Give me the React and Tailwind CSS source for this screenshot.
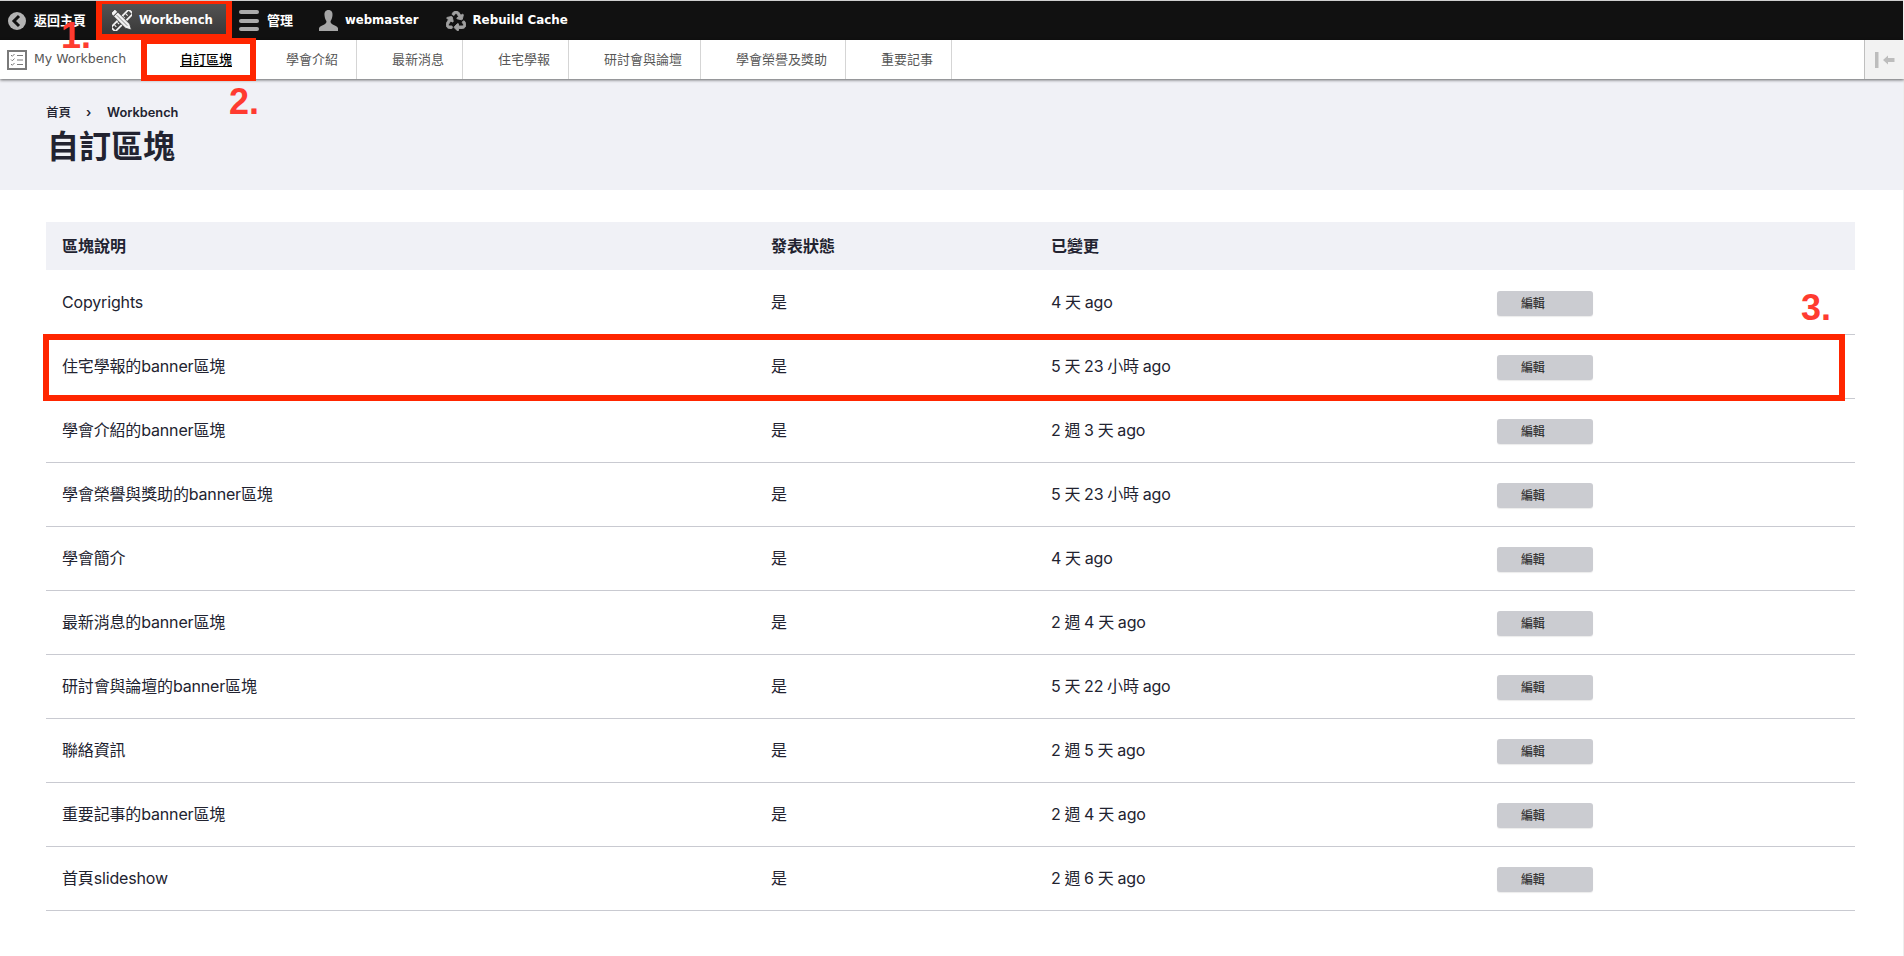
import React from "react";
import { FaRecycle } from "react-icons/fa";

const rows = [
  ["Copyrights", "4 天 ago"],
  ["住宅學報的banner區塊", "5 天 23 小時 ago"],
  ["學會介紹的banner區塊", "2 週 3 天 ago"],
  ["學會榮譽與獎助的banner區塊", "5 天 23 小時 ago"],
  ["學會簡介", "4 天 ago"],
  ["最新消息的banner區塊", "2 週 4 天 ago"],
  ["研討會與論壇的banner區塊", "5 天 22 小時 ago"],
  ["聯絡資訊", "2 週 5 天 ago"],
  ["重要記事的banner區塊", "2 週 4 天 ago"],
  ["首頁slideshow", "2 週 6 天 ago"],
];
const tabs = ["學會介紹", "最新消息", "住宅學報", "研討會與論壇", "學會榮譽及獎助", "重要記事"];
const barFont = "font-['DejaVu_Sans','Noto_Sans_CJK_TC',sans-serif]";

function BackIcon() {
  return (
    <svg width="18" height="18" viewBox="0 0 18 18">
      <circle cx="9" cy="9" r="9" fill="#b3b3b3" />
      <path d="M11 4 L6 9 L11 14" fill="none" stroke="#111" strokeWidth="3" />
    </svg>
  );
}
function ToolsIcon() {
  return (
    <svg width="20" height="21" viewBox="0 0 20 21" fill="none" stroke="#f2f2f2">
      <g transform="rotate(45 10 10.5)">
        <rect x="7" y="-2" width="6" height="25" strokeWidth="1.8" />
        <path d="M8 3h2.5M8 7h2.5M8 11h2.5M8 15h2.5M8 19h2.5" strokeWidth="1.1" />
      </g>
      <g transform="rotate(-45 10 10.5)">
        <path d="M7 -2.5 H13 V18.5 L10 24 L7 18.5 Z" fill="#f2f2f2" stroke="#3c3c3c" strokeWidth="0.8" />
        <path d="M7 1.5H13" stroke="#3c3c3c" strokeWidth="1" />
        <path d="M10 3V18" stroke="#777" strokeWidth="0.8" />
      </g>
    </svg>
  );
}
function MenuIcon() {
  return (
    <div className="flex h-[21px] w-5 flex-col justify-between">
      <div className="h-[4px] rounded-sm bg-[#aaaaaa]" />
      <div className="h-[4px] rounded-sm bg-[#aaaaaa]" />
      <div className="h-[4px] rounded-sm bg-[#aaaaaa]" />
    </div>
  );
}
function PersonIcon() {
  return (
    <svg width="19" height="21" viewBox="0 0 19 21">
      <path
        d="M9.5 0C6.6 0 5.2 2.2 5.5 5.2 5.8 8 6.5 9.8 7.4 11 7.7 12.6 6.8 13.8 4.8 14.8 2.5 15.9.6 16.5 0 18.2V21H19V18.2C18.4 16.5 16.5 15.9 14.2 14.8 12.2 13.8 11.3 12.6 11.6 11 12.5 9.8 13.2 8 13.5 5.2 13.8 2.2 12.4 0 9.5 0Z"
        fill="#a6a6a6"
      />
    </svg>
  );
}
function ChecklistIcon() {
  return (
    <svg width="20" height="20" viewBox="0 0 20 20" fill="none" stroke="#7a7a7a">
      <rect x="1" y="1" width="18" height="18" strokeWidth="2" />
      <path d="M4 5l1.3 1.3L7.5 4M4 9.5l1.3 1.3L7.5 8.5M4 14l1.3 1.3L7.5 13" strokeWidth="1" />
      <path d="M10 5.5h6M10 10h6M10 14.5h6" strokeWidth="1.2" />
    </svg>
  );
}
function CollapseIcon() {
  return (
    <svg width="20" height="16" viewBox="0 0 20 16" fill="#bdbdbd">
      <rect x="0" y="0" width="3.5" height="16" />
      <path d="M8 8 L13 3.5 V6 H19.5 V10 H13 V12.5 Z" />
    </svg>
  );
}

function Annotation({ className, children }) {
  return (
    <div className={"absolute font-['Liberation_Sans',sans-serif] text-[36px] leading-none font-bold text-[#ff3b30] " + className}>
      {children}
    </div>
  );
}

export default function App() {
  return (
    <div className="relative min-h-[956px] w-full overflow-hidden bg-white font-['Inter','Noto_Sans_CJK_TC',sans-serif] text-[#222330]">
      {/* Toolbar */}
      <div className={"flex h-[40px] items-center border-t border-[#cfcfcf] bg-[#111111] text-[13px] font-bold text-white " + barFont}>
        <div className="flex w-[96px] items-center gap-2 pl-2">
          <BackIcon />
          <span>返回主頁</span>
        </div>
        <div className="flex h-full w-[136px] items-center gap-[7px] bg-gradient-to-b from-[#565656] to-[#343434] pl-4">
          <ToolsIcon />
          <span className="text-[11.7px]">Workbench</span>
        </div>
        <div className="ml-[7px] flex items-center gap-2">
          <MenuIcon />
          <span>管理</span>
        </div>
        <div className="ml-[26px] flex items-center gap-[7px]">
          <PersonIcon />
          <span className="text-[11.7px]">webmaster</span>
        </div>
        <div className="ml-[28px] flex items-center gap-[6px]">
          <FaRecycle className="h-5 w-5 text-[#a0a0a0]" stroke="currentColor" strokeWidth={24} />
          <span className="text-[11.9px]">Rebuild Cache</span>
        </div>
      </div>

      {/* Tray */}
      <div className="relative z-10 flex h-[39px] items-stretch bg-white text-[13px] text-[#565656] shadow-[0_1px_3px_rgba(0,0,0,0.6)]">
        <div className="flex w-[144px] items-center gap-[7px] pl-[7px]">
          <ChecklistIcon />
          <span className={"text-[12.5px] " + barFont}>My Workbench</span>
        </div>
        <div className="flex items-center pr-[19px] pl-[36px] font-medium text-black underline underline-offset-2">自訂區塊</div>
        {tabs.map((t) => (
          <div key={t} className="flex items-center border-r border-[#d5d5d5] pr-[18px] pl-[35px]">
            {t}
          </div>
        ))}
        <div className="ml-auto flex w-[40px] items-center justify-center border-l border-[#bfbfbf] bg-[#f2f2f2] pl-[1px]">
          <CollapseIcon />
        </div>
      </div>

      {/* Page header */}
      <div className="h-[111px] bg-[#f0f1f6] pt-[26px] pl-[46px]">
        <div className="flex h-[17px] items-center text-[12.8px] leading-none font-semibold">
          <span className="text-[12.5px] font-medium">首頁</span>
          <span className="ml-[15px] w-[21px]">›</span>
          <span>Workbench</span>
        </div>
        <h1 className="mt-[3px] pl-[1px] text-[32px] leading-[44px] font-semibold">自訂區塊</h1>
      </div>

      {/* Table */}
      <div className="mt-[32px] ml-[46px] w-[1809px]">
        <div className="mb-px grid h-[48px] grid-cols-[709px_280px_445px_1fr] items-center bg-[#f0f1f6] text-base font-semibold">
          <div className="pl-4">區塊說明</div>
          <div className="pl-4">發表狀態</div>
          <div className="pl-4">已變更</div>
          <div />
        </div>
        {rows.map(([name, changed]) => (
          <div key={name} className="grid h-[64px] grid-cols-[709px_280px_445px_1fr] items-center border-b border-[#c9cad1] text-base tracking-[-0.01em] [word-spacing:-0.5px]">
            <div className="pb-[2px] pl-4">{name}</div>
            <div className="pb-[2px] pl-4">是</div>
            <div className="pb-[2px] pl-4">{changed}</div>
            <div className="pt-[2px] pl-[17px]">
              <div className="flex h-[25px] w-[96px] items-center rounded-[3px] bg-[#cbccd1] pl-6 text-[12px] font-medium text-[#333333] shadow-[0_1px_1px_rgba(0,0,0,0.08)]">
                編輯
              </div>
            </div>
          </div>
        ))}
      </div>

      {/* Right edge */}
      <div className="absolute top-0 right-0 bottom-0 w-px bg-[#eeeeee]" />

      {/* Red annotations laid over the screenshot */}
      <div className="absolute top-[1px] left-[96px] z-20 h-[39px] w-[136px] border-[6px] border-t-[3px] border-[#ff2600]" />
      <div className="absolute top-[38px] left-[141px] z-20 h-[43px] w-[115px] border-[6px] border-[#ff2600]" />
      <div className="absolute top-[334px] left-[43px] z-20 h-[67px] w-[1802px] border-[6px] border-[#ff2600]" />
      <Annotation className="top-[18px] left-[61px] z-30">1.</Annotation>
      <Annotation className="top-[84px] left-[229px] z-30">2.</Annotation>
      <Annotation className="top-[290px] left-[1801px] z-30">3.</Annotation>
    </div>
  );
}
